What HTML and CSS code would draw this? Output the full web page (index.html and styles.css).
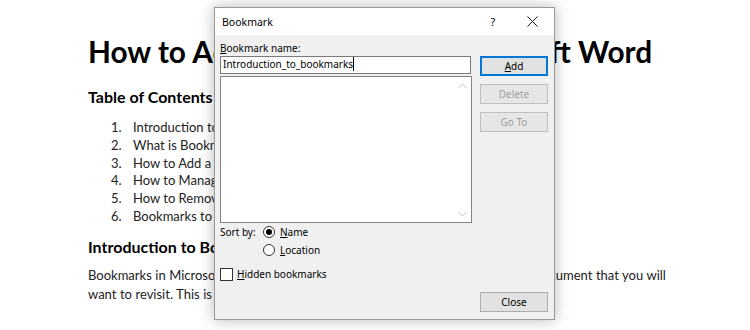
FILE: index.html
```html
<!DOCTYPE html>
<html>
<head>
<meta charset="utf-8">
<link rel="stylesheet" href="styles.css">
</head>
<body>
<div class="doc">
  <h1 class="title">How to Add Bookmarks in Microsoft Word</h1>
  <h2 class="heading">Table of Contents</h2>
  <ol class="toc">
    <li>Introduction to Bookmarks</li>
    <li>What is Bookmark in Word</li>
    <li>How to Add a Bookmark</li>
    <li>How to Manage Bookmarks</li>
    <li>How to Remove Bookmarks</li>
    <li>Bookmarks to the Rescue</li>
  </ol>
  <h2 class="heading heading-2">Introduction to Bookmarks</h2>
  <p class="para">Bookmarks in Microsoft Word allow you to quickly jump to a specific part of a document that you will<br>want to revisit. This is like placing a physical bookmark in a book.</p>
</div>

<div class="dialog">
  <div class="titlebar">
    <span class="dlg-title">Bookmark</span>
    <span class="help">?</span>
    <span class="close-x">
      <svg width="11" height="11" viewBox="0 0 11 11"><path d="M0.5 0.5L10.5 10.5M10.5 0.5L0.5 10.5" stroke="#1a1a1a" stroke-width="1" fill="none"/></svg>
    </span>
  </div>
  <div class="dlg-body">
    <div class="left-col">
      <div class="label"><u>B</u>ookmark name:</div>
      <div class="input"><span class="caret">Introduction_to_bookmarks</span></div>
      <div class="listbox">
        <div class="scroll">
          <svg width="9" height="6" viewBox="0 0 9 6"><path d="M0.5 5L4.5 1L8.5 5" stroke="#c2c2c2" stroke-width="1" fill="none"/></svg>
          <svg width="9" height="6" viewBox="0 0 9 6"><path d="M0.5 1L4.5 5L8.5 1" stroke="#c2c2c2" stroke-width="1" fill="none"/></svg>
        </div>
      </div>
      <div class="sort">
        <span class="sort-label">Sort by:</span>
        <div class="radios">
          <div class="radio-row"><span class="radio checked"></span><span><u>N</u>ame</span></div>
          <div class="radio-row"><span class="radio"></span><span><u>L</u>ocation</span></div>
        </div>
      </div>
      <div class="check-row"><span class="checkbox"></span><span><u>H</u>idden bookmarks</span></div>
    </div>
    <div class="right-col">
      <div class="btn btn-default"><u>A</u>dd</div>
      <div class="btn btn-disabled">Delete</div>
      <div class="btn btn-disabled">Go To</div>
      <div class="btn btn-close">Close</div>
    </div>
  </div>
</div>
</body>
</html>
```

FILE: styles.css
```css
* { box-sizing: border-box; }
html, body { margin: 0; padding: 0; background: #ffffff; }
body { width: 750px; height: 330px; overflow: hidden; position: relative; }

.doc {
  padding: 35px 0 0 88px;
  font-family: "Lato", "Open Sans", sans-serif;
  color: #222;
}
.title {
  margin: 0;
  font-size: 29.8px;
  line-height: 34px;
  font-weight: 700;
  color: #000;
  white-space: nowrap;
}
.heading {
  margin: 18px 0 0 0;
  font-size: 16px;
  line-height: 20px;
  font-weight: 700;
  color: #000;
  white-space: nowrap;
}
.heading-2 { margin-top: 11px; }
.toc {
  margin: 12px 0 0 0;
  padding: 0 0 0 37px;
  font-size: 13px;
  line-height: 17.8px;
  white-space: nowrap;
}
.toc li { padding-left: 8px; }
.para {
  margin: 9px 0 0 0;
  font-size: 13px;
  line-height: 19.5px;
  word-spacing: 0.2px;
  white-space: nowrap;
}

/* Dialog */
.dialog {
  position: absolute;
  left: 214px;
  top: 7px;
  width: 341px;
  height: 313px;
  border: 1px solid #9a9a9a;
  background: #f0f0f0;
  box-shadow: 0 0 14px rgba(0,0,0,0.28);
  font-family: "Noto Sans", "Open Sans", sans-serif;
  font-size: 10px;
  color: #000;
  display: flex;
  flex-direction: column;
}
.titlebar {
  height: 27px;
  background: #fff;
  display: flex;
  align-items: center;
  padding-left: 7px;
}
.dlg-title { flex: 1; font-size: 10.5px; }
.help { width: 14px; text-align: center; font-size: 11px; margin-right: 27px; }
.close-x { width: 11px; height: 11px; margin-right: 16px; display: flex; }

.dlg-body {
  flex: 1;
  display: flex;
  padding: 6px 6px 7px 5px;
}
.left-col { width: 252px; display: flex; flex-direction: column; }
.label { height: 15px; line-height: 14px; }
.label u, .btn u, .radio-row u, .check-row u { text-decoration: underline; text-underline-offset: 1px; }
.input {
  height: 18px;
  border: 1px solid #7a7a7a;
  background: #fff;
  padding-left: 2px;
  line-height: 15px;
  width: 251px;
}
.caret { border-right: 1px solid #000; }
.listbox {
  margin-top: 2px;
  height: 147px;
  border: 1px solid #828282;
  background: #fff;
  display: flex;
  justify-content: flex-end;
}
.scroll {
  width: 17px;
  display: flex;
  flex-direction: column;
  justify-content: space-between;
  align-items: center;
  padding: 6px 0 5px 0;
}
.sort { display: flex; margin-top: 1px; }
.sort-label { width: 43px; line-height: 16px; }
.radios { display: flex; flex-direction: column; gap: 2px; }
.radio-row, .check-row { display: flex; align-items: center; gap: 5px; height: 16px; }
.radio {
  width: 12px; height: 12px;
  border: 1px solid #333;
  border-radius: 50%;
  background: #fff;
  display: flex;
  align-items: center;
  justify-content: center;
}
.radio.checked::after {
  content: "";
  width: 6px; height: 6px;
  border-radius: 50%;
  background: #000;
}
.check-row { margin-top: 8px; gap: 4px; }
.checkbox { width: 13px; height: 13px; border: 1px solid #333; background: #fff; }

.right-col {
  margin-left: 8px;
  width: 68px;
  display: flex;
  flex-direction: column;
  gap: 8px;
  padding-top: 15px;
}
.btn {
  height: 20px;
  border: 1px solid #adadad;
  background: #e1e1e1;
  text-align: center;
  line-height: 18px;
}
.btn-default { border: 1px solid #0078d7; box-shadow: inset 0 0 0 1px #0078d7; }
.btn-disabled { border-color: #bfbfbf; background: #e6e6e6; color: #a0a0a0; }
.btn-close { margin-top: auto; }
```
